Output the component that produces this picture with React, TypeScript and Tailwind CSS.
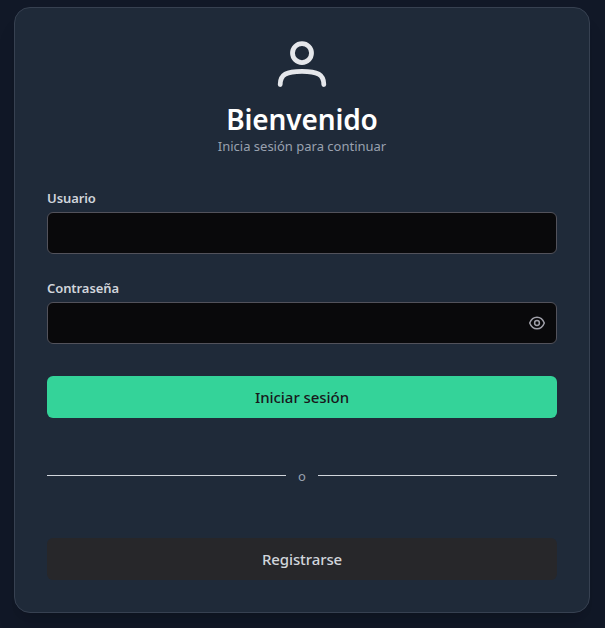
function UserIcon() {
  return (
    <svg width="50" height="48" viewBox="0 0 50 48" fill="none" stroke="#e5e7eb" strokeWidth="4.8" strokeLinecap="round">
      <circle cx="25" cy="13.1" r="9.5" />
      <path d="M3.2 44.5C3.2 34.5 9.5 31.3 25 31.3S46.8 34.5 46.8 44.5" />
    </svg>
  );
}

function EyeIcon() {
  return (
    <svg width="16" height="14" viewBox="0 0 16 14" fill="none" stroke="#a1a1aa" strokeWidth="1.5">
      <path d="M.7 7C2.2 3.2 4.8 1.2 8 1.2S13.8 3.2 15.3 7C13.8 10.8 11.2 12.8 8 12.8S2.2 10.8.7 7Z" strokeLinejoin="round" />
      <circle cx="8" cy="7" r="2.4" />
    </svg>
  );
}

function Field({ id, label, type }: { id: string; label: string; type: string }) {
  return (
    <div>
      <label htmlFor={id} className="block h-5 text-[13px] leading-5 font-semibold tracking-[-0.08px] text-gray-300">
        {label}
      </label>
      <div className="mt-1 flex h-[42px] items-center rounded-md border border-[#52525b] bg-[#09090b] pr-[11px]">
        <input id={id} type={type} className="h-full min-w-0 flex-1 bg-transparent px-3 text-white outline-none" />
        {type === "password" && (
          <button type="button" aria-label="Mostrar contraseña">
            <EyeIcon />
          </button>
        )}
      </div>
    </div>
  );
}

export default function App() {
  return (
    <main className="flex h-[628px] w-full items-start bg-[#111827] pt-[7px] pl-[14px] font-['Noto_Sans','Open_Sans',sans-serif]">
      <section className="h-[606px] w-[576px] rounded-2xl border border-[#374151] bg-[#1f2a39] px-8 shadow-xl">
        <header className="flex flex-col items-center pt-8">
          <UserIcon />
          <h1 className="mt-[13px] text-[28px] leading-9 font-semibold tracking-[-0.15px] whitespace-nowrap text-white">Bienvenido</h1>
          <p className="-mt-px text-[13px] leading-5 whitespace-nowrap text-gray-400">Inicia sesión para continuar</p>
        </header>
        <form className="mt-8 flex flex-col gap-6">
          <Field id="user" label="Usuario" type="text" />
          <Field id="password" label="Contraseña" type="password" />
          <button type="button" className="mt-2 h-[42px] rounded-md bg-[#34d399] text-[15px] font-medium tracking-[-0.05px] text-[#18181b]">
            Iniciar sesión
          </button>
        </form>
        <div className="mt-12 flex h-5 items-center gap-3">
          <div className="-mt-[2px] h-px flex-1 bg-gray-300" />
          <span className="w-2 text-center text-[13px] leading-5 text-gray-400">o</span>
          <div className="-mt-[2px] h-px flex-1 bg-gray-300" />
        </div>
        <button type="button" className="mt-[52px] h-[42px] w-full rounded-md bg-[#27272a] text-[15px] font-medium tracking-[-0.1px] text-gray-300">
          Registrarse
        </button>
      </section>
    </main>
  );
}
